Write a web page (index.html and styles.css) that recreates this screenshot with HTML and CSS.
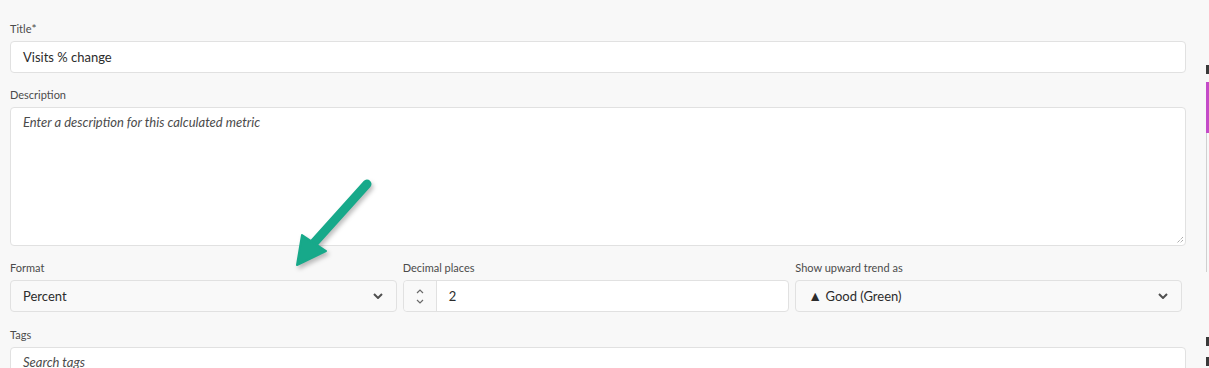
FILE: index.html
```html
<!DOCTYPE html>
<html lang="en">
<head>
    <meta charset="UTF-8">
    <meta name="viewport" content="width=device-width, initial-scale=1.0">
    <title>Calculated metric</title>
    <link rel="stylesheet" href="styles.css">
</head>
<body>
    <div class="page">
        <form class="form">
            <div class="field title">
                <label class="label">Title<span class="req">*</span></label>
                <div class="input">Visits % change</div>
            </div>

            <div class="field desc">
                <label class="label">Description</label>
                <div class="textarea">
                    <span class="placeholder">Enter a description for this calculated metric</span>
                    <svg class="grip" width="8" height="8" viewBox="0 0 8 8">
                        <path d="M7 1 L1 7 M7 4 L4 7" stroke="#8a8a8a" stroke-width="1" stroke-dasharray="1 1"/>
                    </svg>
                </div>
            </div>

            <div class="row">
                <div class="field">
                    <label class="label">Format</label>
                    <div class="select">
                        <span>Percent</span>
                        <svg class="chev" width="10" height="6" viewBox="0 0 10 6"><path d="M1 1 L5 5 L9 1" fill="none" stroke="#505050" stroke-width="2"/></svg>
                    </div>
                </div>
                <div class="field">
                    <label class="label">Decimal places</label>
                    <div class="stepper">
                        <div class="steps">
                            <svg width="8" height="5" viewBox="0 0 8 5"><path d="M1 4 L4 1 L7 4" fill="none" stroke="#6a6a6a" stroke-width="1.2"/></svg>
                            <svg width="8" height="5" viewBox="0 0 8 5"><path d="M1 1 L4 4 L7 1" fill="none" stroke="#6a6a6a" stroke-width="1.2"/></svg>
                        </div>
                        <div class="value">2</div>
                    </div>
                </div>
                <div class="field">
                    <label class="label">Show upward trend as</label>
                    <div class="select">
                        <span><span class="tri">&#9650;</span> Good (Green)</span>
                        <svg class="chev" width="10" height="6" viewBox="0 0 10 6"><path d="M1 1 L5 5 L9 1" fill="none" stroke="#505050" stroke-width="2"/></svg>
                    </div>
                </div>
            </div>

            <div class="field">
                <label class="label">Tags</label>
                <div class="input tags"><span class="placeholder">Search tags</span></div>
            </div>
        </form>

        <aside class="side">
            <div class="mark"></div>
            <div class="panel">
                <div class="accent"></div>
            </div>
            <div class="mark lower"></div>
            <div class="mark"></div>
        </aside>
    </div>

    <svg class="arrow" width="1209" height="368" viewBox="0 0 1209 368">
        <g fill="#17a98a" stroke="#17a98a">
            <line x1="367" y1="184" x2="313" y2="244" stroke-width="9" stroke-linecap="round"/>
            <polygon points="302,235 326,251 297,265" stroke-width="2" stroke-linejoin="round"/>
        </g>
    </svg>
</body>
</html>
```

FILE: styles.css
```css
body {
    margin: 0;
    background: #f8f8f8;
    font-family: Lato, "Open Sans", sans-serif;
    color: #2c2c2c;
    overflow: hidden;
}
.page {
    display: flex;
    height: 368px;
}
.form {
    width: 1177px;
    padding: 22px 0 0 10px;
}
.field {
    margin-bottom: 16px;
}
.field.title { margin-bottom: 15px; }
.field.desc { margin-bottom: 15px; }
.label {
    display: block;
    font-size: 11px;
    line-height: 14px;
    color: #4b4b4b;
    margin-bottom: 5px;
}
.req { font-size: 12px; }
.input, .textarea, .select, .stepper {
    box-sizing: border-box;
    border: 1px solid #e1e1e1;
    border-radius: 4px;
    background: #fff;
    font-size: 13px;
}
.input {
    height: 32px;
    line-height: 30px;
    padding: 0 12px;
}
.input.tags { line-height: 28px; }
.textarea {
    position: relative;
    height: 139px;
    padding: 6px 12px;
    line-height: 16px;
}
.placeholder {
    font-style: italic;
    color: #4b4b4b;
}
.grip {
    position: absolute;
    right: 1px;
    bottom: 1px;
}
.row {
    display: grid;
    grid-template-columns: repeat(3, 1fr);
    column-gap: 6px;
    width: 1172px;
}
.select {
    display: flex;
    align-items: center;
    justify-content: space-between;
    height: 32px;
    padding: 0 13px 0 12px;
    background: #f9f9f9;
}
.tri {
    font-size: 14px;
    line-height: 1;
    color: #2c2c2c;
}
.stepper {
    display: flex;
    height: 32px;
}
.steps {
    width: 32px;
    border-right: 1px solid #e1e1e1;
    background: #f9f9f9;
    border-radius: 4px 0 0 4px;
    display: flex;
    flex-direction: column;
    align-items: center;
    justify-content: center;
    gap: 5px;
}
.value {
    line-height: 30px;
    padding-left: 12px;
}
.side {
    margin-left: 20px;
    width: 3px;
    padding-top: 65px;
}
.mark {
    width: 3px;
    height: 9px;
    background: #3a3a3a;
}
.mark.lower { margin-top: 65px; margin-bottom: 11px; }
.panel {
    margin-top: 8px;
    height: 190px;
    border-left: 1px solid #d0d0d0;
}
.accent {
    width: 3px;
    height: 51px;
    margin-left: -1px;
    background: #c44bc9;
}
.arrow {
    position: absolute;
    top: 0;
    left: 0;
    pointer-events: none;
    filter: drop-shadow(2px 3px 2px rgba(0,0,0,0.25));
}
```
